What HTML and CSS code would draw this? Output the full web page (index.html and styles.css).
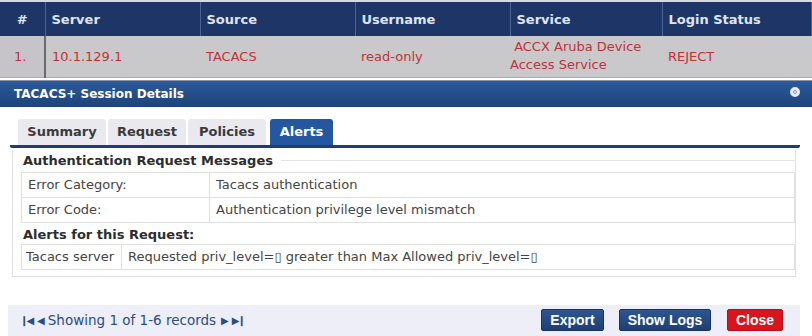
FILE: index.html
```html
<!DOCTYPE html>
<html>
<head>
<meta name="viewport" content="width=device-width, initial-scale=1">
<link rel="stylesheet" href="styles.css">
</head>
<body>

<table class="sessions">
  <tr class="head">
    <th class="num">#</th>
    <th class="c1">Server</th>
    <th class="c1">Source</th>
    <th class="c1">Username</th>
    <th class="c2">Service</th>
    <th>Login Status</th>
  </tr>
  <tr class="row">
    <td class="num">1.</td>
    <td>10.1.129.1</td>
    <td>TACACS</td>
    <td>read-only</td>
    <td class="svc">&nbsp;ACCX Aruba Device<br>Access Service</td>
    <td>REJECT</td>
  </tr>
</table>

<div class="modal">
  <div class="modal-title">
    <span>TACACS+ Session Details</span>
    <span class="x-btn"></span>
  </div>

  <div class="modal-body">
    <div class="tabs">
      <span class="tab">Summary</span>
      <span class="tab">Request</span>
      <span class="tab">Policies</span>
      <span class="tab active">Alerts</span>
    </div>

    <div class="group">
      <div class="legend"><span>Authentication Request Messages</span><span class="rule"></span></div>
      <table class="info">
        <tr><td class="lbl">Error Category:</td><td>Tacacs authentication</td></tr>
        <tr><td class="lbl">Error Code:</td><td>Authentication privilege level mismatch</td></tr>
      </table>
      <div class="sub">Alerts for this Request:</div>
      <table class="info">
        <tr><td class="lbl2">Tacacs server</td><td>Requested priv_level=&#9647; greater than Max Allowed priv_level=&#9647;</td></tr>
      </table>
    </div>
  </div>

  <div class="footer">
    <div class="pager">
      <span class="pg">&#10073;&#9664;</span>
      <span class="pg">&#9664;</span>
      <span class="txt">Showing 1 of 1-6 records</span>
      <span class="pg">&#9654;</span>
      <span class="pg">&#9654;&#10073;</span>
    </div>
    <div class="buttons">
      <span class="btn export">Export</span>
      <span class="btn logs">Show Logs</span>
      <span class="btn red">Close</span>
    </div>
  </div>
</div>

</body>
</html>
```

FILE: styles.css
```css
* {
  box-sizing: border-box;
}

body {
  margin: 0;
  width: 812px;
  height: 336px;
  overflow: hidden;
  font-family: "DejaVu Sans", Verdana, sans-serif;
  font-size: 13px;
  background: #fff;
}

.sessions {
  width: 812px;
  border-collapse: collapse;
  table-layout: fixed;
  border-top: 2px solid #d6d9e0;
}

.sessions th {
  background: #1d3567;
  color: #dfe5f0;
  font-weight: bold;
  text-align: left;
  height: 35px;
  padding: 0 0 0 6px;
  border-right: 1px solid #4a6496;
}

.sessions th.num {
  width: 45px;
  text-align: center;
  padding: 0;
}

.sessions th.c1 {
  width: 155px;
}

.sessions th.c2 {
  width: 152px;
}

.sessions td {
  background: #c9c9cb;
  color: #c0323a;
  height: 41px;
  padding: 0 0 0 6px;
  border-bottom: 1px solid #aaa;
}

.sessions td.num {
  padding: 0 0 0 14px;
  border-right: 2px solid #6a6a6e;
  background: #c6c4c8;
}

.sessions td.svc {
  line-height: 18px;
  padding-left: 0;
}

.modal {
  margin-top: 2px;
}

.modal-title {
  height: 27px;
  background: linear-gradient(#2c5a9c, #1d4379);
  color: #fff;
  font-weight: bold;
  font-size: 12px;
  display: flex;
  align-items: center;
  justify-content: space-between;
  padding: 0 12px 0 14px;
  border-top: 1px solid #8a94a8;
}

.x-btn {
  width: 10px;
  height: 10px;
  border-radius: 50%;
  background: #dfe4ee;
  border: 3px solid #e6eaf2;
  box-shadow: inset 0 0 0 1px #7d8fb0;
  margin-top: -4px;
}

.modal-body {
  padding: 12px 12px 0 10px;
  height: 198px;
}

.tabs {
  display: flex;
  gap: 2px;
  padding-left: 8px;
  border-bottom: 3px solid #1f3d70;
  border-radius: 0 0 2px 2px;
}

.tab {
  height: 26px;
  display: flex;
  align-items: center;
  justify-content: center;
  background: #e9e9ef;
  color: #3a3a3a;
  font-weight: bold;
  border-radius: 3px 3px 0 0;
}

.tab:nth-child(1) { width: 88px; }
.tab:nth-child(2) { width: 78px; }
.tab:nth-child(3) { width: 78px; margin-right: 2px; }

.tab.active {
  width: 63px;
  background: #2556a0;
  color: #fff;
}

.group {
  margin: 2px 0 0 2px;
  width: 784px;
  border: 1px solid #e2e2e2;
  border-top: none;
  padding: 0 0 6px 8px;
}

.legend {
  font-weight: bold;
  color: #2d2d2d;
  height: 22px;
  display: flex;
  align-items: center;
  gap: 8px;
  margin-left: 2px;
}

.legend .rule {
  flex: 1;
  border-top: 1px solid #e4e4e4;
  margin-right: -1px;
}

.info {
  width: 774px;
  border-collapse: collapse;
  color: #444;
}

.info td {
  border: 1px solid #e0e0e0;
  height: 25px;
  padding: 0 6px;
}

.info td.lbl {
  width: 188px;
}

.info td.lbl2 {
  width: 100px;
  white-space: nowrap;
  padding: 0 4px;
}

.sub {
  font-weight: bold;
  color: #2d2d2d;
  height: 21px;
  display: flex;
  align-items: center;
  margin-left: 2px;
  padding-top: 2px;
}

.footer {
  margin-left: 8px;
  width: 792px;
  height: 31px;
  background: #eeeef9;
  display: flex;
  align-items: center;
  justify-content: space-between;
  padding: 0 17px 0 12px;
}

.pager {
  display: flex;
  align-items: center;
  gap: 5px;
  color: #2c4d80;
}

.pager .txt {
  font-size: 13.5px;
}

.pg {
  font-size: 10px;
  letter-spacing: -2px;
}

.buttons {
  display: flex;
  gap: 15px;
}

.btn {
  height: 22px;
  display: flex;
  align-items: center;
  justify-content: center;
  background: linear-gradient(#2f5590, #1d3f74);
  color: #fff;
  font-family: "Liberation Sans", Arial, sans-serif;
  font-size: 14px;
  font-weight: bold;
  border-radius: 2px;
  border: 1px solid #1a325c;
}

.btn.export { width: 63px; }
.btn.logs { width: 92px; }

.btn.red {
  width: 56px;
  margin-left: 1px;
  background: #d8141c;
  border-color: #b30f16;
}
```
